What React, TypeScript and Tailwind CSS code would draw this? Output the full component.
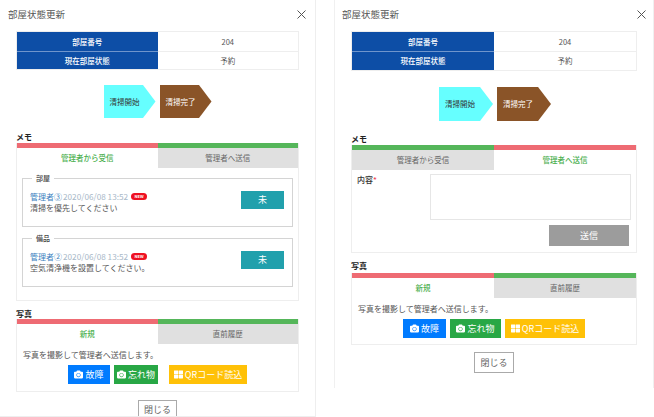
import { FaCamera, FaThLarge } from "react-icons/fa";

const font = { fontFamily: '"Noto Sans CJK JP", "Noto Sans", sans-serif' };

function InfoTable({ h }: { h: string }) {
  const rows = [
    ["部屋番号", "204"],
    ["現在部屋状態", "予約"],
  ];
  return (
    <div className="border border-[#eeeeee]">
      {rows.map(([k, v], i) => (
        <div key={k} className={`grid grid-cols-2 ${h} text-[7.5px] text-center ${i ? "border-t border-[#eeeeee]" : ""}`}>
          <div className={`flex items-center justify-center bg-[#0d4ea6] text-white font-medium ${i ? "border-t border-[#6f95cc] -mt-px" : ""}`}>{k}</div>
          <div className="flex items-center justify-center text-[#555555]">{v}</div>
        </div>
      ))}
    </div>
  );
}

function Arrows({ w, pad }: { w: string; pad: string }) {
  return (
    <div className={`flex justify-center gap-[4px] ${pad}`}>
      <div className={`${w} flex items-center pl-[6px] bg-[#66ffff] text-[7.5px] text-[#333333] [clip-path:polygon(0_0,76%_0,100%_50%,76%_100%,0_100%)]`}>清掃開始</div>
      <div className={`${w} flex items-center pl-[6px] bg-[#8a5428] text-[7.5px] text-white [clip-path:polygon(0_0,76%_0,100%_50%,76%_100%,0_100%)]`}>清掃完了</div>
    </div>
  );
}

function Tabs({ left, right, active, h }: { left: string; right: string; active: 0 | 1; h: string }) {
  const item = (label: string, on: boolean) => (
    <div
      className={`${h} flex items-center justify-center text-[7.5px] border-t-[5px] ${
        on ? "border-[#ee6b73] bg-white text-[#4cb050] font-medium" : "border-[#55b65a] bg-[#e0e0e0] text-[#666666]"
      }`}
    >
      {label}
    </div>
  );
  return (
    <div className="grid grid-cols-2">
      {item(left, active === 0)}
      {item(right, active === 1)}
    </div>
  );
}

function Message({ legend, no, text }: { legend: string; no: string; text: string }) {
  return (
    <div className="relative h-[49px] border border-[#d4d4d4] pl-[7px] pr-[8px] flex items-center justify-between">
      <span className="absolute -top-[6px] left-[9px] bg-white px-[4px] text-[7px] leading-[10px] text-[#444444] font-medium">{legend}</span>
      <div className="-mt-[2px]">
        <div className="flex items-center text-[8px] leading-[11px]">
          <span className="text-[#3b7fc0]">管理者{no}</span>
          <span className="ml-[1px] text-[#a8b8c8] text-[8.2px]">2020/06/08 13:52</span>
          <span className="ml-[3px] w-[16px] h-[7px] rounded-full bg-[#ee1122] text-white text-[4px] leading-[7px] text-center font-bold">NEW</span>
        </div>
        <div className="text-[8px] leading-[11px] text-[#555555]">{text}</div>
      </div>
      <div className="w-[43px] h-[18px] -mt-[5px] bg-[#21a0ac] text-white text-[9px] leading-[18px] text-center">未</div>
    </div>
  );
}

function PhotoCard({ gap, widths }: { gap: string; widths: [string, string, string] }) {
  return (
    <div className="px-[6px] pt-[5px] text-[8px] text-[#555555]">
      <div className="leading-[11px]">写真を撮影して管理者へ送信します。</div>
      <div className={`mt-[5px] flex justify-center ${gap}`}>
        <div className={`${widths[0]} h-[19px] bg-[#007bff] text-white text-[9px] flex items-center justify-center gap-[2px]`}>
          <FaCamera className="w-[9px] h-[9px]" />故障
        </div>
        <div className={`${widths[1]} h-[19px] bg-[#28a745] text-white text-[9px] flex items-center justify-center gap-[2px]`}>
          <FaCamera className="w-[9px] h-[9px]" />忘れ物
        </div>
        <div className={`${widths[2]} h-[19px] bg-[#ffc107] text-white text-[9px] flex items-center justify-center gap-[2px]`}>
          <FaThLarge className="w-[9px] h-[9px]" />QRコード読込
        </div>
      </div>
    </div>
  );
}

function Header({ pr }: { pr: string }) {
  return (
    <div className={`h-[31px] pb-[3px] flex items-center justify-between ${pr} text-[#555555]`}>
      <span className="text-[9.5px]">部屋状態更新</span>
      <svg width="9" height="9" viewBox="0 0 9 9" stroke="#555555" strokeWidth="1" fill="none">
        <path d="M.5 .5l8 8M8.5 .5l-8 8" />
      </svg>
    </div>
  );
}

function Label({ children }: { children: string }) {
  return <div className="text-[8px] leading-[10px] font-bold text-[#222222]">{children}</div>;
}

function CloseBtn({ w, h }: { w: string; h: string }) {
  return (
    <div className={`${w} ${h} mx-auto border border-[#aaaaaa] bg-white text-[#666666] text-[9px] flex items-center justify-center`}>閉じる</div>
  );
}

export default function App() {
  return (
    <div style={font} className="w-[654px] h-[417px] overflow-hidden bg-white flex items-start">
      {/* left panel */}
      <div className="w-[316px] h-[417px] shrink-0 border-r border-b border-[#eeeeee] pl-[8px] overflow-hidden">
        <Header pr="pr-[9px]" />
        <div className="w-[283px] ml-[8px]">
          <InfoTable h="h-[18.5px]" />
          <div className="mt-[15px]"><Arrows w="w-[52px] h-[33px]" pad="" /></div>
          <div className="mt-[14px]"><Label>メモ</Label></div>
          <div className="mt-[1px] border border-t-0 border-[#eeeeee] h-[158px]">
            <Tabs left="管理者から受信" right="管理者へ送信" active={0} h="h-[25px]" />
            <div className="mt-[10px] mx-[5px] flex flex-col gap-[11px]">
              <Message legend="部屋" no="③" text="清掃を優先してください" />
              <Message legend="備品" no="②" text="空気清浄機を設置してください。" />
            </div>
          </div>
          <div className="mt-[8px]"><Label>写真</Label></div>
          <div className="border border-t-0 border-[#eeeeee] h-[73px]">
            <Tabs left="新規" right="直前履歴" active={0} h="h-[25px]" />
            <PhotoCard gap="gap-[4px] [&>*:last-child]:ml-[7px]" widths={["w-[42px]", "w-[44px]", "w-[78px]"]} />
          </div>
          <div className="mt-[8px]"><CloseBtn w="w-[39px]" h="h-[20px]" /></div>
        </div>
      </div>

      {/* right panel */}
      <div className="ml-[18px] w-[320px] h-[388px] shrink-0 border-l border-r border-[#f0f0f0] pl-[7px]">
        <Header pr="pr-[7px]" />
        <div className="w-[286px] ml-[9px]">
          <InfoTable h="h-[19px]" />
          <div className="mt-[16px]"><Arrows w="w-[54px] h-[34px]" pad="pl-[2px]" /></div>
          <div className="mt-[13px]"><Label>メモ</Label></div>
          <div className="mt-[1px] border border-t-0 border-[#eeeeee] h-[108px]">
            <Tabs left="管理者から受信" right="管理者へ送信" active={1} h="h-[25px]" />
            <div className="flex pl-[5px] pr-[5px] pt-[4px]">
              <div className="w-[73px] text-[8px] leading-[11px] font-medium text-[#333333]">内容<span className="text-[#ee4455]">*</span></div>
              <div className="flex-1 h-[46px] border border-[#e6e6e6]" />
            </div>
            <div className="mt-[5px] flex justify-end pr-[7px]">
              <div className="w-[80px] h-[21px] bg-[#9c9c9c] text-white text-[9px] flex items-center justify-center">送信</div>
            </div>
          </div>
          <div className="mt-[8px]"><Label>写真</Label></div>
          <div className="mt-[2px] border border-t-0 border-[#eeeeee] h-[72px]">
            <Tabs left="新規" right="直前履歴" active={0} h="h-[25px]" />
            <PhotoCard gap="gap-[4px]" widths={["w-[43px]", "w-[51px]", "w-[80px]"]} />
          </div>
          <div className="mt-[7px]"><CloseBtn w="w-[40px]" h="h-[21px]" /></div>
        </div>
      </div>
    </div>
  );
}
